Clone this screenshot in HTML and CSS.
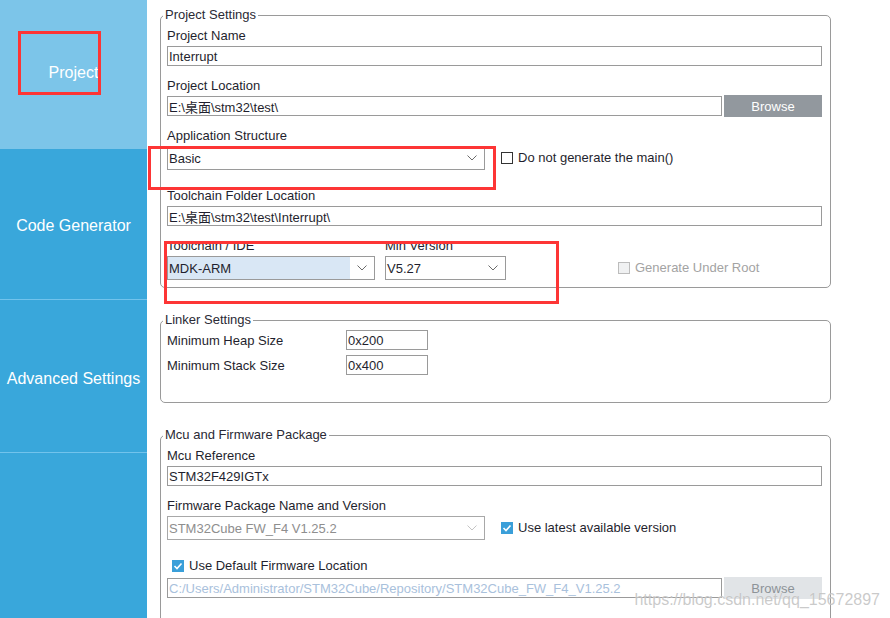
FILE: index.html
```html
<!DOCTYPE html>
<html lang="en">
<head>
  <meta charset="UTF-8">
  <title>Project Manager</title>
  <link rel="stylesheet" href="styles.css">
</head>
<body>
  <div class="sidebar">
    <div class="tab tab-active">Project</div>
    <div class="tab tab-code">Code Generator</div>
    <div class="tab tab-adv">Advanced Settings</div>
    <div class="tab tab-rest"></div>
  </div>

  <div class="main">
    <fieldset class="group group-project">
      <legend>Project Settings</legend>

      <div class="field first">
        <div class="label">Project Name</div>
        <input class="text full" type="text" value="Interrupt">
      </div>

      <div class="field">
        <div class="label">Project Location</div>
        <div class="row">
          <input class="text path" type="text" value="E:\桌面\stm32\test\">
          <button class="browse">Browse</button>
        </div>
      </div>

      <div class="field">
        <div class="label">Application Structure</div>
        <div class="row">
          <div class="select sel-app">
            <span class="sel-text">Basic</span>
            <svg class="chev" width="10" height="6" viewBox="0 0 10 6"><polyline points="0.5,0.5 5,5 9.5,0.5" fill="none" stroke="#6b6b6b" stroke-width="1"/></svg>
          </div>
          <label class="check">
            <span class="box"></span>Do not generate the main()
          </label>
        </div>
      </div>

      <div class="field gap-big">
        <div class="label">Toolchain Folder Location</div>
        <input class="text full" type="text" value="E:\桌面\stm32\test\Interrupt\">
      </div>

      <div class="field">
        <div class="tool-row">
          <div class="col">
            <div class="label">Toolchain / IDE</div>
            <div class="select sel-ide">
              <span class="sel-text sel-hl">MDK-ARM</span>
              <svg class="chev" width="10" height="6" viewBox="0 0 10 6"><polyline points="0.5,0.5 5,5 9.5,0.5" fill="none" stroke="#6b6b6b" stroke-width="1"/></svg>
            </div>
          </div>
          <div class="col">
            <div class="label">Min Version</div>
            <div class="select sel-ver">
              <span class="sel-text">V5.27</span>
              <svg class="chev" width="10" height="6" viewBox="0 0 10 6"><polyline points="0.5,0.5 5,5 9.5,0.5" fill="none" stroke="#6b6b6b" stroke-width="1"/></svg>
            </div>
          </div>
          <label class="check disabled root">
            <span class="box"></span>Generate Under Root
          </label>
        </div>
      </div>
    </fieldset>

    <fieldset class="group group-linker">
      <legend>Linker Settings</legend>
      <div class="lrow">
        <span class="lname">Minimum Heap Size</span>
        <input class="text small" type="text" value="0x200">
      </div>
      <div class="lrow">
        <span class="lname">Minimum Stack Size</span>
        <input class="text small" type="text" value="0x400">
      </div>
    </fieldset>

    <fieldset class="group group-mcu">
      <legend>Mcu and Firmware Package</legend>

      <div class="field first">
        <div class="label">Mcu Reference</div>
        <input class="text full" type="text" value="STM32F429IGTx">
      </div>

      <div class="field">
        <div class="label">Firmware Package Name and Version</div>
        <div class="row">
          <div class="select sel-app off">
            <span class="sel-text">STM32Cube FW_F4 V1.25.2</span>
            <svg class="chev" width="10" height="6" viewBox="0 0 10 6"><polyline points="0.5,0.5 5,5 9.5,0.5" fill="none" stroke="#c4c4c4" stroke-width="1"/></svg>
          </div>
          <label class="check">
            <span class="box on"><svg width="12" height="12" viewBox="0 0 12 12"><polyline points="2.5,6 5,8.5 9.5,3.5" fill="none" stroke="#fff" stroke-width="1.6"/></svg></span>Use latest available version
          </label>
        </div>
      </div>

      <div class="field gap-big">
        <label class="check fw-loc">
          <span class="box on"><svg width="12" height="12" viewBox="0 0 12 12"><polyline points="2.5,6 5,8.5 9.5,3.5" fill="none" stroke="#fff" stroke-width="1.6"/></svg></span>Use Default Firmware Location
        </label>
        <div class="row fw-path">
          <input class="text path off" type="text" value="C:/Users/Administrator/STM32Cube/Repository/STM32Cube_FW_F4_V1.25.2" disabled>
          <button class="browse off">Browse</button>
        </div>
      </div>
    </fieldset>
  </div>

  <div class="mark mark-1"></div>
  <div class="mark mark-2"></div>
  <div class="mark mark-3"></div>
  <div class="watermark">https://blog.csdn.net/qq_15672897</div>
</body>
</html>
```

FILE: styles.css
```css
body {
  margin: 0;
  height: 618px;
  overflow: hidden;
  display: flex;
  font-family: "Liberation Sans", Arial, "Noto Sans CJK SC", sans-serif;
  font-size: 13px;
  color: #1f1f2e;
  background: #fff;
}

/* left navigation */
.sidebar {
  width: 147px;
  flex-shrink: 0;
  display: flex;
  flex-direction: column;
  background-color: #39a7db;
}

.tab {
  box-sizing: border-box;
  display: flex;
  justify-content: center;
  align-items: center;
  color: #fff;
  font-size: 16px;
}

.tab-active {
  height: 149px;
  padding-bottom: 4px;
  background-color: #7cc5e9;
}

.tab-code {
  height: 150px;
  padding-top: 4px;
}

.tab-adv {
  height: 153px;
  padding-top: 5px;
  border-top: 1px solid #72c3ec;
}

.tab-rest {
  flex: 1;
  border-top: 1px solid #72c3ec;
}

/* content */
.main {
  padding: 7px 0 0 13px;
}

.group {
  width: 671px;
  box-sizing: border-box;
  min-width: 0;
  margin: 0;
  padding: 5px 7px 7px 6px;
  border: 1px solid #9a9a9a;
  border-radius: 5px;
}

.group legend {
  padding: 0 2px;
  margin-left: -4px;
  line-height: 16px;
  color: #2a2a35;
}

.group-linker {
  margin-top: 24px;
  padding-top: 2px;
  padding-bottom: 27px;
}

.group-mcu {
  margin-top: 24px;
  height: 220px;
}

.field {
  margin-top: 12px;
}

.field.first {
  margin-top: 0;
}

.field.gap-big {
  margin-top: 18px;
}

.label {
  line-height: 16px;
  margin-bottom: 2px;
}

.row {
  display: flex;
  align-items: center;
}

.text {
  box-sizing: border-box;
  height: 20px;
  margin: 0;
  padding: 0 1px;
  border: 1px solid #9a9a9a;
  font-family: inherit;
  font-size: 13px;
  color: #1f1f2e;
  background: #fff;
  outline: none;
}

.text.full {
  display: block;
  width: 655px;
}

.text.path {
  width: 555px;
}

.text.small {
  width: 82px;
}

.text.off {
  color: #a9c1dc;
}

.browse {
  width: 98px;
  height: 22px;
  margin: -1px 0 -1px 2px;
  border: none;
  background-color: #92989e;
  color: #fff;
  font-family: inherit;
  font-size: 13px;
  padding: 0;
}

.browse.off {
  background-color: #e1e4e7;
  color: #8d9398;
}

/* dropdowns */
.select {
  box-sizing: border-box;
  height: 24px;
  border: 1px solid #9a9a9a;
  display: flex;
  align-items: center;
  background: #fff;
}

.sel-text {
  flex: 1;
  align-self: stretch;
  display: flex;
  align-items: center;
  padding-left: 1px;
}

.chev {
  margin: 0 7px 0 6px;
}

.sel-app {
  width: 318px;
}

.sel-ide {
  width: 208px;
}

.sel-hl {
  background-color: #d9e7f5;
  margin-right: 2px;
}

.sel-ide .chev {
  margin-left: 5px;
}

.sel-ver {
  width: 121px;
}

.select.off {
  border-color: #a8a8a8;
}

.select.off .sel-text {
  color: #8e8e8e;
}

.tool-row {
  display: flex;
  align-items: flex-end;
  gap: 10px;
}

/* checkboxes */
.check {
  display: flex;
  align-items: center;
  margin-left: 16px;
  line-height: 16px;
}

.box {
  box-sizing: border-box;
  width: 12px;
  height: 12px;
  margin-right: 5px;
  border: 1px solid #333;
  background: #fff;
}

.box.on {
  border: none;
  background-color: #3a9fd9;
}

.box svg {
  display: block;
}

.check.disabled {
  color: #a3a3a3;
}

.check.disabled .box {
  border-color: #bcbcbc;
  background-color: #f0f1f2;
}

.check.root {
  margin-left: 102px;
  height: 24px;
}

.check.fw-loc {
  margin-left: 5px;
}

.fw-path {
  margin-top: 4px;
}

/* linker rows */
.lrow {
  display: flex;
  align-items: center;
  margin-bottom: 5px;
}

.lrow:last-child {
  margin-bottom: 0;
}

.lname {
  width: 179px;
}

/* annotation boxes drawn over the screenshot */
.mark {
  position: absolute;
  border: 3px solid #fd3535;
  box-sizing: border-box;
}

.mark-1 {
  left: 18px;
  top: 31px;
  width: 83px;
  height: 64px;
}

.mark-2 {
  left: 148px;
  top: 146px;
  width: 348px;
  height: 44px;
}

.mark-3 {
  left: 164px;
  top: 241px;
  width: 395px;
  height: 63px;
}

.watermark {
  position: absolute;
  right: 10px;
  top: 590px;
  font-size: 16px;
  line-height: 20px;
  color: rgba(185, 185, 185, 0.75);
  text-shadow: 0 0 1px rgba(255, 255, 255, 0.6);
}
```
